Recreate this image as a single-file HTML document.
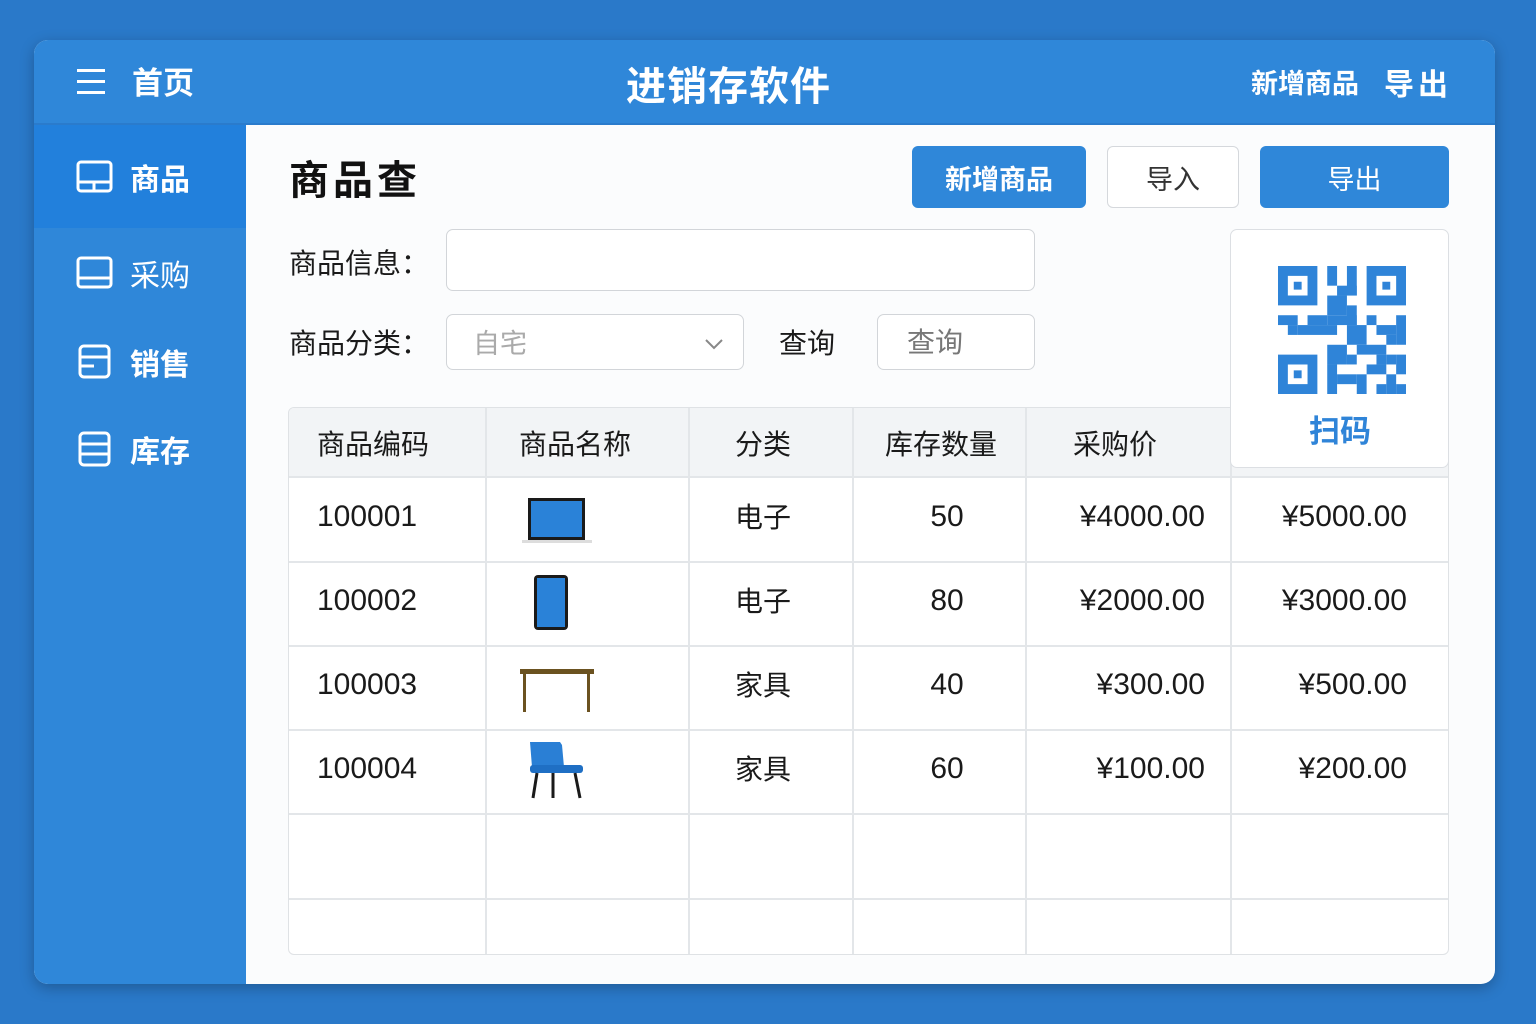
<!DOCTYPE html>
<html><head><meta charset="utf-8"><style>
*{margin:0;padding:0;box-sizing:border-box}
body{width:1536px;height:1024px;background:#2a79c9;font-family:"Liberation Sans","Noto Sans CJK SC",sans-serif;position:relative;overflow:hidden}
.a{position:absolute}
.card{left:34px;top:40px;width:1461px;height:944px;border-radius:14px;overflow:hidden;background:#fbfcfd;box-shadow:0 4px 14px rgba(0,0,0,.25)}
.hdr{left:0;top:0;width:1461px;height:85px;background:#2f87d9;border-bottom:2px solid #2a7bcc}
.side{left:0;top:85px;width:212px;height:859px;background:#2f87d9}
.w{color:#fff;font-weight:bold}
.nav{left:0;width:212px;height:103px;color:#fff;font-size:30px;font-weight:bold;display:flex;align-items:center;padding-left:96px}
.nav svg{position:absolute;left:42px}
.btn{border-radius:6px;display:flex;align-items:center;justify-content:center;font-size:27px}
.lab{font-size:28px;color:#1a1a1a}
.inp{border:1.5px solid #d2d5d9;border-radius:7px;background:#fff}
.tbl{left:254px;top:367px;width:1161px;height:548px;border:1.5px solid #dfe2e5;border-radius:6px;background:#fff;overflow:hidden}
.th{background:#f2f4f6}
.vl{position:absolute;top:0;width:1.5px;height:548px;background:#e3e6e9}
.hl{position:absolute;left:0;width:1161px;height:1.5px;background:#e3e6e9}
.t{position:absolute;font-size:30px;color:#1a1a1a}
.c{position:absolute;font-size:28px;color:#1a1a1a}
.r{position:absolute;font-size:30px;color:#1a1a1a;text-align:right;width:200px}
.m{position:absolute;font-size:30px;color:#1a1a1a;text-align:center;width:100px}
</style></head><body>
<div class="a card">
 <div class="a hdr">
  <svg class="a" style="left:43px;top:28px" width="30" height="28"><rect y="1" width="28" height="3" fill="#fff"/><rect y="12" width="28" height="3" fill="#fff"/><rect y="23" width="28" height="3" fill="#fff"/></svg>
  <div class="a w" style="left:98px;top:18px;font-size:31px">首页</div>
  <div class="a w" style="left:592px;top:14px;font-size:40px;letter-spacing:1px">进销存软件</div>
  <div class="a w" style="left:1217px;top:22px;font-size:27px">新增商品</div>
  <div class="a w" style="left:1350px;top:20px;font-size:30px;letter-spacing:4px">导出</div>
 </div>
 <div class="a side">
  <div class="a nav" style="top:0;background:#2280dc">
   <svg width="38" height="34"><rect x="2" y="2" width="33" height="29" rx="3" fill="none" stroke="#fff" stroke-width="3"/><line x1="2" y1="22" x2="35" y2="22" stroke="#fff" stroke-width="3"/><line x1="18" y1="22" x2="18" y2="31" stroke="#fff" stroke-width="3"/></svg>商品</div>
  <div class="a nav" style="top:96px;font-weight:normal">
   <svg width="38" height="34"><rect x="2" y="2" width="33" height="29" rx="3" fill="none" stroke="#fff" stroke-width="3"/><line x1="2" y1="22" x2="35" y2="22" stroke="#fff" stroke-width="3"/></svg>采购</div>
  <div class="a nav" style="top:185px">
   <svg width="38" height="36"><rect x="4" y="2" width="29" height="31" rx="4" fill="none" stroke="#fff" stroke-width="3"/><line x1="4" y1="13" x2="33" y2="13" stroke="#fff" stroke-width="3"/><line x1="4" y1="22" x2="18" y2="22" stroke="#fff" stroke-width="3"/></svg>销售</div>
  <div class="a nav" style="top:272px">
   <svg width="38" height="36"><rect x="4" y="2" width="29" height="32" rx="4" fill="none" stroke="#fff" stroke-width="3"/><line x1="4" y1="13" x2="33" y2="13" stroke="#fff" stroke-width="3"/><line x1="4" y1="23" x2="33" y2="23" stroke="#fff" stroke-width="3"/></svg>库存</div>
 </div>
 <div class="a" style="left:255px;top:108px;font-size:40px;font-weight:bold;color:#111;letter-spacing:4px">商品查</div>
 <div class="a btn" style="left:878px;top:106px;width:174px;height:62px;background:#2f87d9;color:#fff;font-weight:bold">新增商品</div>
 <div class="a btn" style="left:1073px;top:106px;width:132px;height:62px;background:#fff;border:1.5px solid #d5d8dc;color:#333">导入</div>
 <div class="a btn" style="left:1226px;top:106px;width:189px;height:62px;background:#2f87d9;color:#fff">导出</div>
 <div class="a lab" style="left:255px;top:202px">商品信息：</div>
 <div class="a inp" style="left:412px;top:189px;width:589px;height:62px"></div>
 <div class="a lab" style="left:255px;top:282px">商品分类：</div>
 <div class="a inp" style="left:412px;top:274px;width:298px;height:56px"><span class="a" style="left:26px;top:7px;font-size:27px;color:#aaa">自宅</span>
  <svg class="a" style="left:257px;top:22px" width="20" height="14"><polyline points="2,3 10,11 18,3" fill="none" stroke="#888" stroke-width="2"/></svg></div>
 <div class="a lab" style="left:745px;top:282px">查询</div>
 <div class="a inp" style="left:843px;top:274px;width:158px;height:56px"><span class="a" style="left:29px;top:6px;font-size:28px;color:#777">查询</span></div>

 <div class="a tbl">
  <div class="a th" style="left:0;top:0;width:1161px;height:68px"></div>
  <div class="vl" style="left:196px"></div><div class="vl" style="left:399px"></div><div class="vl" style="left:563px"></div><div class="vl" style="left:736px"></div><div class="vl" style="left:941px"></div>
  <div class="hl" style="top:68px"></div><div class="hl" style="top:153px"></div><div class="hl" style="top:237px"></div><div class="hl" style="top:321px"></div><div class="hl" style="top:405px"></div><div class="hl" style="top:490px"></div>
  <div class="c" style="left:28px;top:15px">商品编码</div>
  <div class="c" style="left:230px;top:15px">商品名称</div>
  <div class="c" style="left:446px;top:15px">分类</div>
  <div class="c" style="left:596px;top:15px">库存数量</div>
  <div class="c" style="left:784px;top:15px">采购价</div>

  <div class="t" style="left:28px;top:92px">100001</div><div class="c" style="left:446px;top:88px">电子</div><div class="m" style="left:608px;top:92px">50</div><div class="r" style="left:716px;top:92px">¥4000.00</div><div class="r" style="left:918px;top:92px">¥5000.00</div>
  <div class="t" style="left:28px;top:176px">100002</div><div class="c" style="left:446px;top:172px">电子</div><div class="m" style="left:608px;top:176px">80</div><div class="r" style="left:716px;top:176px">¥2000.00</div><div class="r" style="left:918px;top:176px">¥3000.00</div>
  <div class="t" style="left:28px;top:260px">100003</div><div class="c" style="left:446px;top:256px">家具</div><div class="m" style="left:608px;top:260px">40</div><div class="r" style="left:716px;top:260px">¥300.00</div><div class="r" style="left:918px;top:260px">¥500.00</div>
  <div class="t" style="left:28px;top:344px">100004</div><div class="c" style="left:446px;top:340px">家具</div><div class="m" style="left:608px;top:344px">60</div><div class="r" style="left:716px;top:344px">¥100.00</div><div class="r" style="left:918px;top:344px">¥200.00</div>

  <svg class="a" style="left:232px;top:88px" width="72" height="50"><rect x="7" y="2" width="57" height="42" fill="#1a1a1a"/><rect x="10" y="5" width="51" height="36" fill="#2a82d8"/><rect x="1" y="44" width="70" height="3" fill="#ddd"/></svg>
  <svg class="a" style="left:244px;top:166px" width="36" height="58"><rect x="1" y="1" width="34" height="55" rx="4" fill="#1a1a1a"/><rect x="4" y="4" width="28" height="49" fill="#2a82d8"/></svg>
  <svg class="a" style="left:230px;top:260px" width="76" height="46"><rect x="1" y="1" width="74" height="5" fill="#6b5220"/><rect x="4" y="6" width="3" height="38" fill="#6b5220"/><rect x="68" y="6" width="3" height="38" fill="#6b5220"/></svg>
  <svg class="a" style="left:238px;top:332px" width="60" height="60"><path d="M3 2h30l2 3 2 22H5z" fill="#2a7fd5"/><rect x="3" y="25" width="53" height="8" rx="3" fill="#1f6fc4"/><line x1="10" y1="33" x2="6" y2="58" stroke="#1a1a1a" stroke-width="3"/><line x1="26" y1="33" x2="26" y2="58" stroke="#1a1a1a" stroke-width="3"/><line x1="48" y1="33" x2="53" y2="58" stroke="#1a1a1a" stroke-width="3"/></svg>
 </div>

 <div class="a" style="left:1196px;top:189px;width:219px;height:239px;background:#fff;border:1.5px solid #dcdfe3;border-radius:7px">
  <svg class="a" style="left:45px;top:36px" width="132" height="128" viewBox="0 0 13 13">
   <g fill="#2f84d8">
   <path d="M0 0h4v4H0zM1 1v2h2V1z" fill-rule="evenodd"/><rect x="1.6" y="1.6" width=".8" height=".8"/>
   <path d="M9 0h4v4H9zM10 1v2h2V1z" fill-rule="evenodd"/><rect x="10.6" y="1.6" width=".8" height=".8"/>
   <path d="M0 9h4v4H0zM1 10v2h2v-2z" fill-rule="evenodd"/><rect x="1.6" y="10.6" width=".8" height=".8"/>
   <rect x="5" y="0" width="1" height="2"/><rect x="7" y="0" width="1" height="3"/><rect x="5" y="3" width="2" height="2"/><rect x="6" y="2" width="2" height="1"/><rect x="7" y="4" width="1" height="2"/>
   <rect x="0" y="5" width="2" height="1"/><rect x="1" y="6" width="1" height="1"/><rect x="3" y="5" width="2" height="1"/><rect x="2" y="6" width="4" height="1"/><rect x="5" y="5" width="3" height="1"/>
   <rect x="7" y="6" width="2" height="2"/><rect x="9" y="5" width="1" height="1"/><rect x="10" y="6" width="2" height="1"/><rect x="12" y="5" width="1" height="3"/><rect x="11" y="7" width="1" height="1"/>
   <rect x="5" y="8" width="2" height="2"/><rect x="8" y="8" width="3" height="1"/><rect x="10" y="9" width="1" height="1"/><rect x="12" y="9" width="1" height="2"/><rect x="9" y="10" width="2" height="1"/>
   <rect x="5" y="10" width="1" height="3"/><rect x="6" y="11" width="2" height="1"/><rect x="8" y="11" width="1" height="2"/><rect x="10" y="12" width="1" height="1"/><rect x="11" y="11" width="1" height="2"/><rect x="12" y="12" width="1" height="1"/><rect x="7" y="9" width="1" height="1"/><rect x="11" y="9" width="1" height="1"/>
   </g></svg>
  <div class="a" style="left:78px;top:176px;font-size:31px;font-weight:bold;color:#2f84d8">扫码</div>
 </div>
</div>
</body></html>
